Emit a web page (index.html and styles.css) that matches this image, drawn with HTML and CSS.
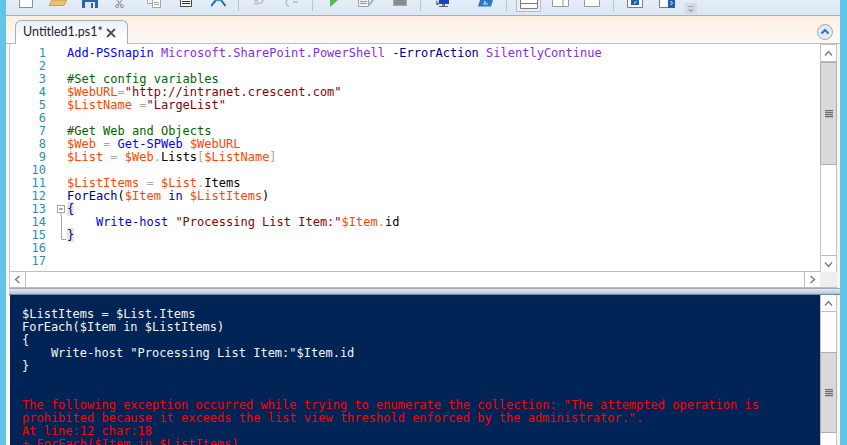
FILE: index.html
```html
<!DOCTYPE html>
<html lang="en">
<head>
<meta charset="utf-8">
<title>Windows PowerShell ISE</title>
<link rel="stylesheet" href="styles.css">
</head>
<body>
<div class="app">
  <div class="edge edge-left"></div>
  <div class="pane">
    <div class="toolbar">
      <span class="tb"><svg width="14" height="8" viewBox="0 0 14 8"><path d="M.5 -1V7.500H13.500V-1" fill="#fff" stroke="#8d8d8d"/></svg></span>
      <span class="tb"><svg width="18" height="6" viewBox="0 0 18 6"><path d="M3 0H18L15 5.500H0Z" fill="#e8c56f" stroke="#c9a24a"/></svg></span>
      <span class="tb"><svg width="16" height="8" viewBox="0 0 16 8"><rect width="16" height="8" fill="#2b65a8"/><rect x="3" y="2" width="10" height="6" fill="#dfe8f2"/><rect x="9" y="3" width="2" height="5" fill="#2b65a8"/></svg></span>
      <span class="tb tb-nudge"><svg width="9" height="8" viewBox="0 0 9 8"><path d="M2 0L6 5M7 0L3 5" stroke="#a8a8a8" stroke-width="1.300" fill="none"/><circle cx="2" cy="6.200" r="1.500" fill="none" stroke="#8f8f8f"/><circle cx="7" cy="6.200" r="1.500" fill="none" stroke="#8f8f8f"/></svg></span>
      <span class="tb"><svg width="14" height="8" viewBox="0 0 14 8"><path d="M.5 0V3.500H5M5.500 0V7.500H13.500V0M7 2.500H12M7 4.500H12" fill="#fff" stroke="#a5a5a5"/></svg></span>
      <span class="tb"><svg width="12" height="7" viewBox="0 0 12 7"><path d="M.5 0V6.500H11.500V0" fill="#fff" stroke="#444"/><path d="M2 1.500H10M2 3.500H10" stroke="#333" stroke-width="1.200"/></svg></span>
      <span class="tb"><svg width="15" height="7" viewBox="0 0 15 7"><path d="M5 0L0 6M10 0L14.500 6" stroke="#1f6fb5" stroke-width="2" fill="none"/><path d="M4 0H11" stroke="#3a8ed0" stroke-width="2"/></svg></span>
      <span class="sep sep-a"></span>
      <span class="tb"><svg width="13" height="5" viewBox="0 0 13 5"><path d="M1 4C4 4 10 4 10 0M1 1H5" fill="none" stroke="#b4b9c1" stroke-width="1.300"/></svg></span>
      <span class="tb"><svg width="15" height="7" viewBox="0 0 15 7"><path d="M3 0C1 3 3 6 5 6.500M9 2H14" fill="none" stroke="#b4b9c1" stroke-width="1.300"/></svg></span>
      <span class="sep sep-b"></span>
      <span class="tb"><svg width="8" height="7" viewBox="0 0 8 7"><path d="M0 0H8L0 7Z" fill="#55b848"/></svg></span>
      <span class="tb"><svg width="16" height="7" viewBox="0 0 16 7"><path d="M.5 0V6.500H10.500V0" fill="#eef0f2" stroke="#a3a3a3"/><path d="M2 1.500H9M2 3.500H9" stroke="#9a9a9a"/><path d="M11 5L15 0" stroke="#aaa" stroke-width="2"/></svg></span>
      <span class="tb tb-shift"><svg width="14" height="6" viewBox="0 0 14 6"><rect width="14" height="6" fill="#8a8a8a"/><path d="M.5 0V5.500H13.500V0" fill="none" stroke="#a8a8a8"/></svg></span>
      <span class="sep sep-c"></span>
      <span class="tb"><svg width="14" height="7" viewBox="0 0 14 7"><rect x="3" width="10" height="4" fill="#1d3fc4"/><path d="M0 0L3 3V5H0Z" fill="#7d8a99"/><rect x="6" y="4" width="3" height="2" fill="#777"/><rect x="3" y="6" width="9" height="1" fill="#666"/></svg></span>
      <span class="tb tb-gap"><svg width="15" height="7" viewBox="0 0 15 7"><path d="M2 0H15L13 6.500H0Z" fill="#2a78c2"/><path d="M5 4H10" stroke="#d5e6f5"/><path d="M6 1L8 2.500L6 3" stroke="#d5e6f5" fill="none"/></svg></span>
      <span class="sep sep-b"></span>
      <span class="tb tb-tight"><span class="layout-active"><svg width="18" height="9" viewBox="0 0 18 9"><path d="M.5 0V8.500H17.500V0" fill="#fff" stroke="#7d7d7d"/><path d="M1 3.500H17" stroke="#7d7d7d"/></svg></span></span>
      <span class="tb"><svg width="17" height="7" viewBox="0 0 17 7"><path d="M.5 0V6.500H16.500V0" fill="#fff" stroke="#9a9a9a"/><path d="M11 0V6" stroke="#9a9a9a"/></svg></span>
      <span class="tb"><svg width="16" height="7" viewBox="0 0 16 7"><path d="M.5 0V6.500H15.500V0" fill="#fff" stroke="#9a9a9a"/></svg></span>
      <span class="sep sep-b"></span>
      <span class="tb"><svg width="16" height="8" viewBox="0 0 16 8"><path d="M.5 0V7.500H15.500V0" fill="#fff" stroke="#7c7c7c"/><rect x="4" width="8" height="5" fill="#1f63b0"/><path d="M7 3.500L9.500 1.500" stroke="#fff"/></svg></span>
      <span class="tb"><svg width="16" height="8" viewBox="0 0 16 8"><path d="M.5 0V7.500H15.500V0" fill="#fff" stroke="#7c7c7c"/><rect x="9" width="7" height="8" fill="#1f63b0"/><path d="M11.500 1L13.500 3L11.500 5" stroke="#fff" fill="none"/></svg></span>
      <span class="overflow-btn"><svg width="8" height="8" viewBox="0 0 8 8"><path d="M1 1.500H7" stroke="#a9a9a9"/><path d="M1 4.500H7L4 7.500Z" fill="#a9a9a9"/></svg></span>
    </div>

    <div class="tabstrip">
      <div class="tab">
        <span class="tab-title">Untitled1.ps1*</span>
        <svg class="tab-close" width="10" height="10" viewBox="0 0 10 10"><path d="M1 1L9 9M9 1L1 9" stroke="#4a4f55" stroke-width="1.800"/></svg>
      </div>
      <span class="collapse"><svg width="16" height="16" viewBox="0 0 16 16"><circle cx="8" cy="8" r="7.500" fill="#e4ebf3" stroke="#a2aab3"/><path d="M4.500 9.500L8 6L11.500 9.500" fill="none" stroke="#2f73c0" stroke-width="2"/></svg></span>
    </div>

    <div class="editor-row">
      <div class="editor-col">
        <div class="editor">
          <div class="line"><span class="ln">1</span><span class="fold"></span><span class="code"><i class="cmd">Add-PSSnapin</i> <i class="arg">Microsoft.SharePoint.PowerShell</i> <i class="par">-ErrorAction</i> <i class="arg">SilentlyContinue</i></span></div>
          <div class="line"><span class="ln">2</span><span class="fold"></span><span class="code"></span></div>
          <div class="line"><span class="ln">3</span><span class="fold"></span><span class="code"><i class="com">#Set config variables</i></span></div>
          <div class="line"><span class="ln">4</span><span class="fold"></span><span class="code"><i class="var">$WebURL</i><i class="op">=</i><i class="str">"http://intranet.crescent.com"</i></span></div>
          <div class="line"><span class="ln">5</span><span class="fold"></span><span class="code"><i class="var">$ListName</i> <i class="op">=</i><i class="str">"LargeList"</i></span></div>
          <div class="line"><span class="ln">6</span><span class="fold"></span><span class="code"></span></div>
          <div class="line"><span class="ln">7</span><span class="fold"></span><span class="code"><i class="com">#Get Web and Objects</i></span></div>
          <div class="line"><span class="ln">8</span><span class="fold"></span><span class="code"><i class="var">$Web</i> <i class="op">=</i> <i class="cmd">Get-SPWeb</i> <i class="var">$WebURL</i></span></div>
          <div class="line"><span class="ln">9</span><span class="fold"></span><span class="code"><i class="var">$List</i> <i class="op">=</i> <i class="var">$Web</i><i class="op">.</i>Lists<i class="op">[</i><i class="var">$ListName</i><i class="op">]</i></span></div>
          <div class="line"><span class="ln">10</span><span class="fold"></span><span class="code"></span></div>
          <div class="line"><span class="ln">11</span><span class="fold"></span><span class="code"><i class="var">$ListItems</i> <i class="op">=</i> <i class="var">$List</i><i class="op">.</i>Items</span></div>
          <div class="line"><span class="ln">12</span><span class="fold"></span><span class="code"><i class="kw">ForEach</i>(<i class="var">$Item</i> <i class="kw">in</i> <i class="var">$ListItems</i>)</span></div>
          <div class="line"><span class="ln">13</span><span class="fold"><svg width="21" height="13" viewBox="0 0 21 13"><rect x="11.500" y="2.500" width="7" height="7" fill="#fff" stroke="#a5a5a5"/><path d="M13 6H17" stroke="#555"/><path d="M15 10V13" stroke="#a5a5a5"/></svg></span><span class="code"><b class="brace">{</b></span></div>
          <div class="line"><span class="ln">14</span><span class="fold"><svg width="21" height="13" viewBox="0 0 21 13"><path d="M15.500 0V13" stroke="#a5a5a5"/></svg></span><span class="code">    <i class="cmd">Write-host</i> <i class="str">"Processing List Item:"</i><i class="var">$Item</i><i class="op">.</i>id</span></div>
          <div class="line"><span class="ln">15</span><span class="fold"><svg width="21" height="13" viewBox="0 0 21 13"><path d="M15.500 0V10.500H20" fill="none" stroke="#a5a5a5"/></svg></span><span class="code"><b class="brace">}</b></span></div>
          <div class="line"><span class="ln">16</span><span class="fold"></span><span class="code"></span></div>
          <div class="line"><span class="ln">17</span><span class="fold"></span><span class="code"></span></div>
        </div>
        <div class="hscroll">
          <span class="sbtn sbtn-h"><svg width="7" height="9" viewBox="0 0 7 9"><path d="M5.500 1L1.500 4.500L5.500 8" fill="none" stroke="#7a7a7a" stroke-width="1.400"/></svg></span>
          <span class="htrack"></span>
          <span class="sbtn sbtn-h sbtn-end"><svg width="7" height="9" viewBox="0 0 7 9"><path d="M1.500 1L5.500 4.500L1.500 8" fill="none" stroke="#7a7a7a" stroke-width="1.400"/></svg></span>
        </div>
      </div>
      <div class="vscroll-col">
        <div class="vscroll vscroll-editor">
          <span class="sbtn sbtn-v"><svg width="9" height="7" viewBox="0 0 9 7"><path d="M1 5.500L4.500 1.500L8 5.500" fill="none" stroke="#7a7a7a" stroke-width="1.400"/></svg></span>
          <span class="thumb thumb-editor"><span class="grip"></span></span>
          <span class="vtrack"></span>
          <span class="sbtn sbtn-v sbtn-bottom"><svg width="9" height="7" viewBox="0 0 9 7"><path d="M1 1.500L4.500 5.500L8 1.500" fill="none" stroke="#7a7a7a" stroke-width="1.400"/></svg></span>
        </div>
        <div class="corner"></div>
      </div>
    </div>

    <div class="splitter"></div>

    <div class="console-row">
      <pre class="console"><span class="blank"> </span>
$ListItems = $List.Items
ForEach($Item in $ListItems)
{
    Write-host "Processing List Item:"$Item.id
}


<span class="err">The following exception occurred while trying to enumerate the collection: "The attempted operation is
prohibited because it exceeds the list view threshold enforced by the administrator.".
At line:12 char:18
+ ForEach($Item in $ListItems)</span></pre>
      <div class="vscroll vscroll-console">
        <span class="sbtn sbtn-v"><svg width="9" height="7" viewBox="0 0 9 7"><path d="M1 5.500L4.500 1.500L8 5.500" fill="none" stroke="#7a7a7a" stroke-width="1.400"/></svg></span>
        <span class="thumb thumb-console"><span class="grip"></span></span>
      </div>
    </div>
  </div>
  <div class="edge edge-right"></div>
</div>
</body>
</html>
```

FILE: styles.css
```css
* { box-sizing: border-box; }
html, body { margin: 0; padding: 0; }
body { width: 847px; height: 445px; overflow: hidden; background: #fbf3e8; }

.app { display: flex; width: 847px; height: 445px; overflow: hidden; }
.edge { background: #5fc6ea; flex: none; }
.edge-left { width: 6px; }
.edge-right { width: 7px; }
.pane { width: 834px; display: flex; flex-direction: column; background: linear-gradient(90deg, #fdf9f3, #fbf5ec); }

/* toolbar */
.toolbar { height: 16px; flex: none; display: flex; align-items: flex-start; padding-left: 4px; overflow: hidden;
  background: linear-gradient(180deg, #e4edf8, #dbe7f5); border-bottom: 1px solid #adadad; }
.tb { width: 32px; height: 15px; flex: none; display: flex; justify-content: center; align-items: flex-start; }
.tb svg { display: block; }
.tb-nudge { padding-right: 6px; }
.tb-shift { padding-left: 4px; }
.tb-gap { margin-left: 10px; }
.sep { width: 1px; height: 11px; background: #bcc3cc; flex: none; }
.sep-a { margin: 0 4px 0 4px; }
.sep-b { margin: 0 5px 0 5px; }
.sep-c { margin: 0 6px 0 6px; }
.layout-active { display: block; width: 25px; height: 12px; padding: 0 3px; background: #eceef1; border: 1px solid #b9bcc0; border-top: 0; }
.overflow-btn { width: 12px; height: 11px; margin: 3px 0 0 2px; flex: none; display: flex; justify-content: center; align-items: flex-end; padding-bottom: 1px; background: #d6dce3; }

/* tab strip */
.tabstrip { height: 28px; flex: none; display: flex; align-items: flex-end; justify-content: space-between; padding: 0 4px 0 9px;
  background: linear-gradient(180deg, #fdf0e1, #fbf9f6); border-bottom: 1px solid #bdbdbd; }
.tab { width: 113px; height: 24px; margin-bottom: -1px; display: flex; align-items: center; justify-content: space-between; padding: 0 11px 0 7px;
  background: linear-gradient(180deg, #e9f0f9, #fff 70%); border: 1px solid #a9b0b8; border-bottom: 0; border-radius: 6px 6px 0 0; }
.tab-title { font: 12.500px/1 Lato, "Noto Sans", sans-serif; color: #1d1d33; white-space: nowrap; }
.tab-close { flex: none; }
.collapse { display: block; width: 16px; height: 16px; margin: 0 3px 3px 0; }
.collapse svg { display: block; }

/* editor */
.editor-row { height: 244px; flex: none; margin: 0 0 0 3px; display: flex; }
.editor-col { width: 811px; flex: none; display: flex; flex-direction: column; border-left: 1px solid #c6c6c6; }
.editor { flex: 1; background: #fff; padding-top: 3px; overflow: hidden; font: 12px/13px "DejaVu Sans Mono", monospace; }
.line { display: flex; height: 13px; white-space: pre; }
.ln { width: 36px; flex: none; text-align: right; color: #2b91af; }
.fold { width: 21px; flex: none; height: 13px; }
.fold svg { display: block; }
.code { color: #000; white-space: pre; }
.code i { font-style: normal; }
.cmd { color: #0000ff; }
.arg { color: #8a2be2; }
.par { color: #000080; }
.com { color: #006400; }
.var { color: #ff4500; }
.str { color: #8b0000; }
.op { color: #a9a9a9; }
.kw { color: #00008b; }
.brace { font-weight: normal; background: #e6e6e6; color: #000080; }

.hscroll { height: 17px; flex: none; display: flex; background: #fff; border-top: 1px solid #bdbdbd; border-bottom: 1px solid #bdbdbd; }
.htrack { flex: 1; }
.sbtn { display: flex; align-items: center; justify-content: center; flex: none; background: #fff; }
.sbtn-h { width: 16px; border-right: 1px solid #bdbdbd; }
.sbtn-end { border-right: 0; border-left: 1px solid #bdbdbd; }
.sbtn-v { height: 17px; border-bottom: 1px solid #bdbdbd; }
.sbtn-bottom { border-bottom: 0; border-top: 1px solid #bdbdbd; }

.vscroll-col { width: 17px; flex: none; display: flex; flex-direction: column; }
.vscroll { width: 17px; flex: none; display: flex; flex-direction: column; background: #fff; border-left: 1px solid #c6c6c6; border-right: 1px solid #c6c6c6; }
.vscroll-editor { height: 228px; border-top: 1px solid #c6c6c6; }
.corner { flex: 1; background: #eeeeee; border-bottom: 1px solid #bdbdbd; }
.thumb { display: flex; align-items: center; justify-content: center; flex: none; background: #d9d9d9; border: 1px solid #b0b0b0; margin: 0 -1px; }
.thumb-editor { height: 103px; }
.thumb-console { height: 81px; margin-top: 40px; }
.vtrack { flex: 1; }
.grip { display: block; width: 8px; height: 8px; background: repeating-linear-gradient(180deg, #6e6e6e 0 1px, #bdbdbd 1px 2px); }

/* splitter */
.splitter { height: 7px; flex: none; margin-left: 3px; margin-right: 0; border-top: 1px solid #a9a9a9; border-bottom: 1px solid #7d8794;
  background: linear-gradient(180deg, #e3e9f1, #a9c6e8); }

/* console */
.console-row { flex: 1; min-height: 0; display: flex; margin-left: 4px; }
.console { width: 810px; flex: none; margin: 0; padding: 0 0 0 12px; background: #012456; color: #f5f5f5; overflow: hidden;
  font: 12px/13px "DejaVu Sans Mono", monospace; white-space: pre; }
.blank { display: inline-block; height: 13px; }
.err { color: #ff0000; }
.vscroll-console { height: 150px; }
```
